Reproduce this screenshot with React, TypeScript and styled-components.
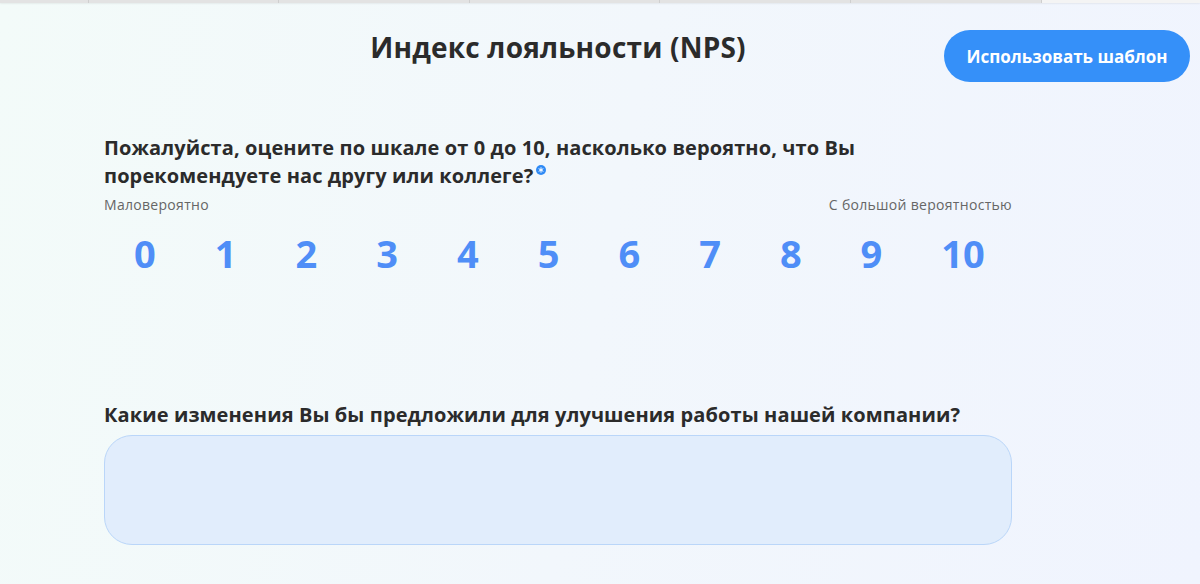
import styled, { createGlobalStyle } from 'styled-components';

const GlobalStyle = createGlobalStyle`
    html, body {
        margin: 0;
        padding: 0;
    }
    body {
        font-family: "Open Sans", "Noto Sans", Arial, sans-serif;
        color: #2b2b2b;
    }
`;

const tabs = [89, 190, 191, 190, 191, 191];
const scores = [0, 1, 2, 3, 4, 5, 6, 7, 8, 9, 10];

const App = () => {
    return (
        <Page>
            <GlobalStyle />
            <TabStrip>
                {tabs.map((w, i) => (
                    <Tab key={i} style={{ width: w }} />
                ))}
                <Tab $active />
            </TabStrip>

            <Content>
                <Header>
                    <Title>Индекс лояльности (NPS)</Title>
                    <TemplateButton>Использовать шаблон</TemplateButton>
                </Header>

                <Question>
                    Пожалуйста, оцените по шкале от 0 до 10, насколько вероятно, что Вы порекомендуете нас другу или коллеге?
                    <Required>
                        <svg width="10" height="10" viewBox="0 0 10 10">
                            <circle cx="5" cy="5" r="5" fill="#2f8af5" />
                            <path d="M5 2.7v4.6M3 3.85l4 2.3M3 6.15l4-2.3" stroke="#fff" strokeWidth="1" strokeLinecap="round" />
                        </svg>
                    </Required>
                </Question>

                <ScaleLabels>
                    <span>Маловероятно</span>
                    <span>С большой вероятностью</span>
                </ScaleLabels>

                <Scale>
                    {scores.map((n) => (
                        <Score key={n}>{n}</Score>
                    ))}
                </Scale>

                <Question $top={124}>Какие изменения Вы бы предложили для улучшения работы нашей компании?</Question>
                <Answer />
            </Content>
        </Page>
    );
};

export default App;

const Page = styled.div`
    min-height: 584px;
    background: linear-gradient(100deg, #f3fbf9 0%, #f2f7fc 50%, #f0f4fe 100%);
    overflow: hidden;
`;

const TabStrip = styled.div`
    display: flex;
    height: 3px;
    box-shadow: 0 1px 2px rgba(0, 0, 0, 0.06);
`;

const Tab = styled.div<{ $active?: boolean }>`
    height: 100%;
    box-sizing: border-box;
    flex: ${(p) => (p.$active ? '1' : 'none')};
    background: ${(p) => (p.$active ? '#f4f4f4' : '#e3e3e3')};
    border-right: ${(p) => (p.$active ? 'none' : '1px solid #cfcfcf')};
`;

const Content = styled.div`
    padding-left: 104px;
`;

const Header = styled.div`
    display: grid;
    grid-template-columns: 840px 68px 246px;
    padding-top: 24px;
`;

const Title = styled.h1`
    grid-row: 1;
    grid-column: 1 / 3;
    margin: 0;
    text-align: center;
    font-size: 28px;
    line-height: 40px;
    font-weight: 700;
    letter-spacing: 0.2px;
    color: #2b2b2b;
`;

const TemplateButton = styled.button`
    grid-row: 1;
    grid-column: 2 / 4;
    justify-self: start;
    margin-top: 3px;
    width: 246px;
    height: 52px;
    border: none;
    border-radius: 26px;
    background: #3590f9;
    color: #ffffff;
    font-family: inherit;
    font-size: 17px;
    font-weight: 700;
    cursor: pointer;
`;

const Question = styled.p<{ $top?: number }>`
    width: 908px;
    margin: ${(p) => p.$top ?? 52}px 0 0;
    font-size: 20px;
    line-height: 28px;
    font-weight: 700;
    letter-spacing: 0.1px;
    color: #2b2b2b;
`;

const Required = styled.span`
    display: inline-block;
    margin-left: 3px;
    vertical-align: 8px;
    line-height: 0;
`;

const ScaleLabels = styled.div`
    width: 908px;
    display: flex;
    justify-content: space-between;
    margin-top: 6px;
    font-size: 14px;
    line-height: 18px;
    letter-spacing: 0.3px;
    color: #666666;
`;

const Scale = styled.div`
    display: flex;
    gap: 59px;
    padding-left: 30px;
    margin-top: 15px;
`;

const Score = styled.div`
    font-size: 38px;
    line-height: 48px;
    font-weight: 700;
    color: #4f8ef7;
    cursor: pointer;
`;

const Answer = styled.div`
    width: 908px;
    height: 110px;
    box-sizing: border-box;
    margin-top: 6px;
    border: 1px solid #bad6f9;
    border-radius: 28px;
    background: #e1edfc;
`;
